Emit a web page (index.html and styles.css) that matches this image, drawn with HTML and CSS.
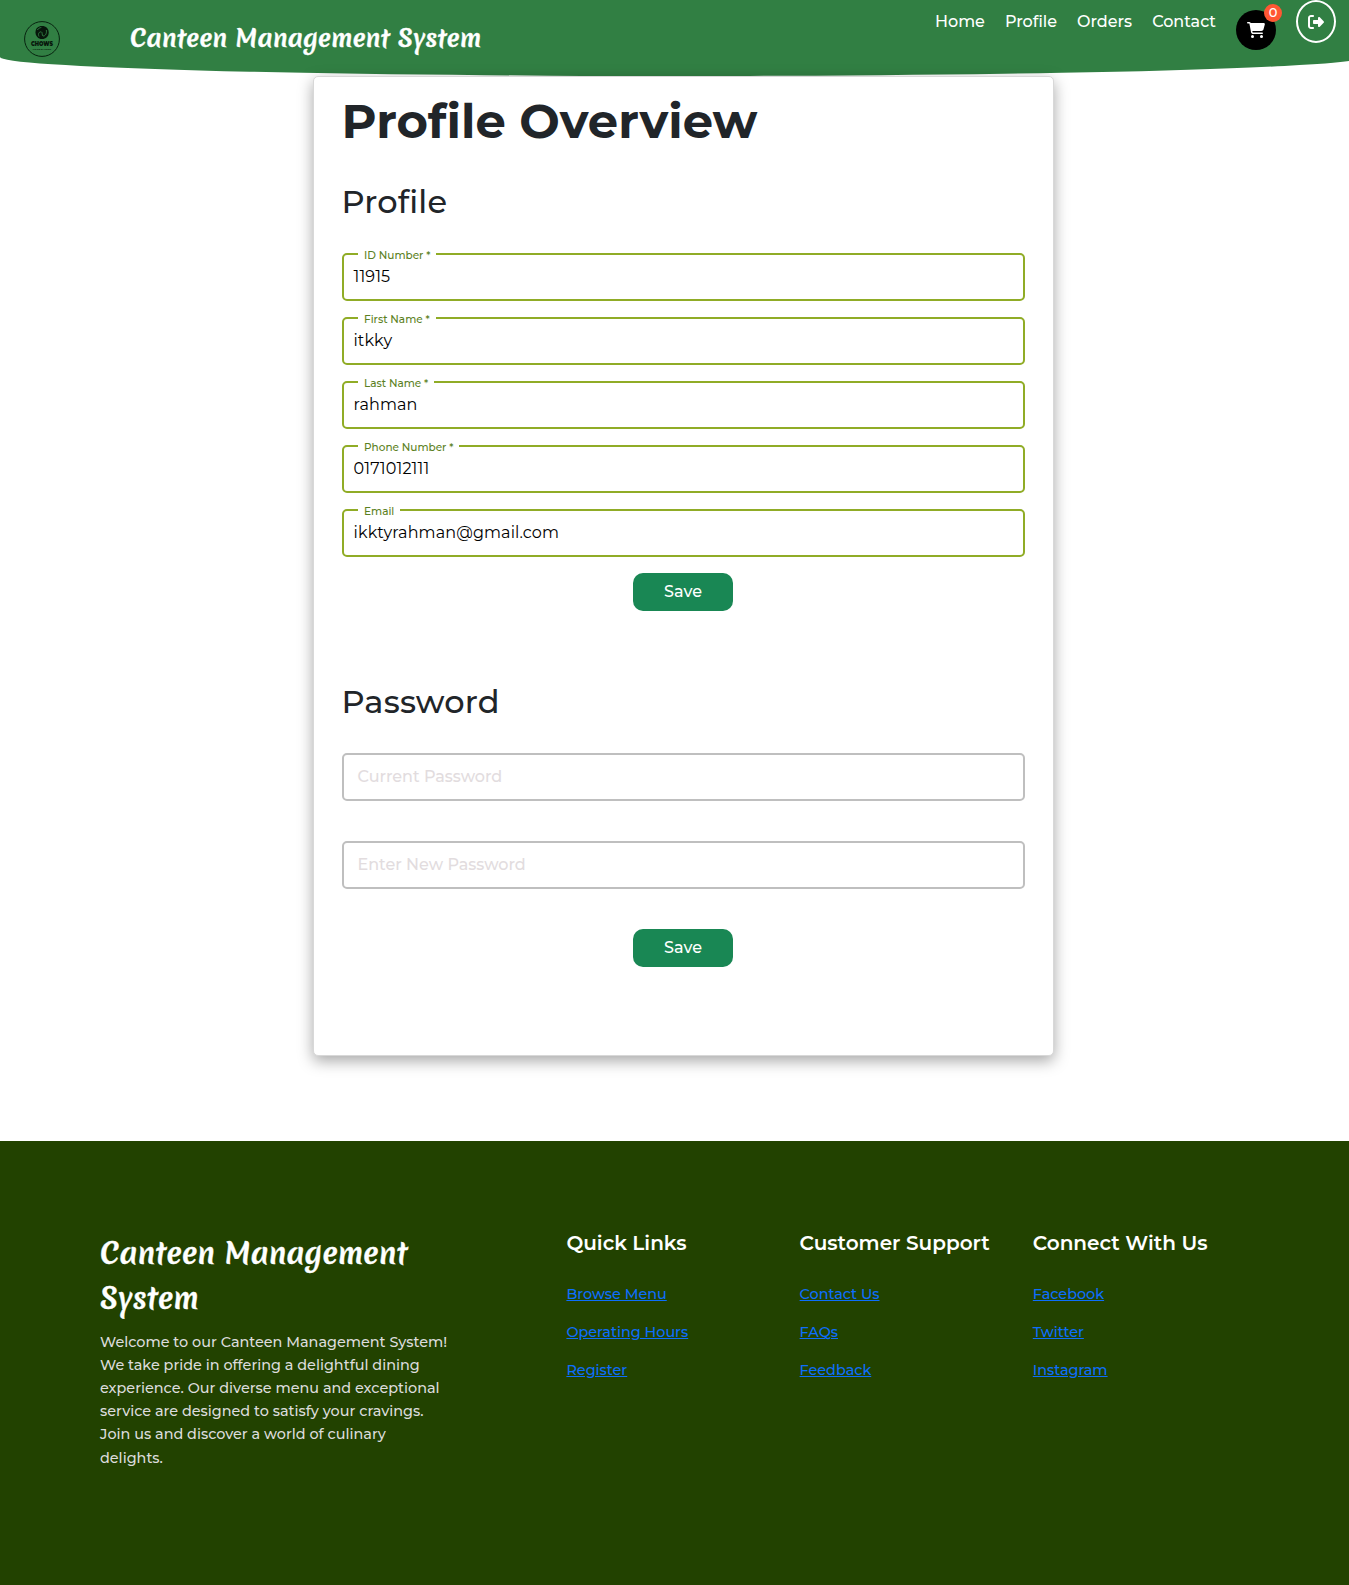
FILE: index.html
```html
<!DOCTYPE html>
<html lang="en">
<head>
<meta charset="utf-8">
<title>Canteen Management System</title>
<link rel="stylesheet" href="styles.css">
</head>
<body>
<header class="header">
  <svg class="logo" viewBox="0 0 36 36">
    <circle cx="18" cy="18" r="17.4" fill="none" stroke="#07230f" stroke-width="1"/>
    <path d="M18 5c-4 0-6.500 2.500-6.500 6.200 0 3.800 2.700 6.800 6.500 6.800s6.700-2.800 6.700-6.600S22 5 18 5z" fill="#07160b"/>
    <path d="M15 15.500c-1.500-3 .5-5 2.300-4.600 1.500.5.300 3.100 1.700 4.100 2.500.3 4-3 3.300-6M13.300 9c1-1.500 2.500-2.300 4-2.500" fill="none" stroke="#317f43" stroke-width=".9"/>
    <text x="18" y="25" text-anchor="middle" textLength="22" lengthAdjust="spacingAndGlyphs" class="logo-name">CHOWS</text>
    <text x="18" y="29.300" text-anchor="middle" class="logo-sub">FOOD &amp; MORE</text>
  </svg>
  <div class="brand">Canteen Management System</div>
  <nav class="nav">
    <a>Home</a><a>Profile</a><a>Orders</a><a>Contact</a>
    <div class="cart">
      <svg width="18" height="16" viewBox="0 0 576 512" fill="#fff"><path d="M0 24C0 10.700 10.700 0 24 0H69.500c22 0 41.500 12.800 50.600 32h411c26.300 0 45.500 25 38.600 50.400l-41 152.300c-8.500 31.400-37 53.300-69.500 53.300H170.700l5.400 28.500c2.200 11.300 12.100 19.500 23.600 19.500H488c13.300 0 24 10.700 24 24s-10.700 24-24 24H199.700c-34.600 0-64.300-24.600-70.700-58.500L77.400 54.500c-.7-3.800-4-6.500-7.900-6.500H24C10.700 48 0 37.300 0 24zM128 464a48 48 0 1 1 96 0 48 48 0 1 1-96 0zm336-48a48 48 0 1 1 0 96 48 48 0 1 1 0-96z"/></svg>
      <span class="count">0</span>
    </div>
    <div class="logout">
      <svg width="16" height="16" viewBox="0 0 512 512" fill="#fff"><path d="M377.900 105.900L500.700 228.700c7.200 7.200 11.300 17.100 11.300 27.300s-4.100 20.100-11.300 27.300L377.900 406.100c-6.400 6.400-15 9.900-24 9.900c-18.700 0-33.900-15.200-33.900-33.900l0-62.100-128 0c-17.700 0-32-14.300-32-32l0-64c0-17.700 14.300-32 32-32l128 0 0-62.100c0-18.700 15.200-33.900 33.900-33.900c9 0 17.600 3.600 24 9.900zM160 96L96 96c-17.700 0-32 14.300-32 32l0 256c0 17.700 14.300 32 32 32l64 0c17.700 0 32 14.300 32 32s-14.300 32-32 32l-64 0c-53 0-96-43-96-96L0 128C0 75 43 32 96 32l64 0c17.700 0 32 14.300 32 32s-14.300 32-32 32z"/></svg>
    </div>
  </nav>
</header>
<main class="card">
  <h1 class="title">Profile Overview</h1>
  <section>
    <h2 class="subtitle">Profile</h2>
    <div class="fields">
      <div class="field"><label class="label">ID Number *</label><span class="value">11915</span></div>
      <div class="field"><label class="label">First Name *</label><span class="value">itkky</span></div>
      <div class="field"><label class="label">Last Name *</label><span class="value">rahman</span></div>
      <div class="field"><label class="label">Phone Number *</label><span class="value">0171012111</span></div>
      <div class="field"><label class="label">Email</label><span class="value">ikktyrahman@gmail.com</span></div>
    </div>
    <button class="save">Save</button>
  </section>
  <section class="password">
    <h2 class="subtitle">Password</h2>
    <div class="fields wide">
      <div class="field empty">Current Password</div>
      <div class="field empty">Enter New Password</div>
    </div>
    <button class="save">Save</button>
  </section>
</main>
<footer class="footer">
  <div class="about">
    <h2 class="footer-brand">Canteen Management System</h2>
    <p class="blurb">Welcome to our Canteen Management System! We take pride in offering a delightful dining experience. Our diverse menu and exceptional service are designed to satisfy your cravings. Join us and discover a world of culinary delights.</p>
  </div>
  <div class="links"><h3>Quick Links</h3><a href="#">Browse Menu</a><a href="#">Operating Hours</a><a href="#">Register</a></div>
  <div class="links"><h3>Customer Support</h3><a href="#">Contact Us</a><a href="#">FAQs</a><a href="#">Feedback</a></div>
  <div class="links"><h3>Connect With Us</h3><a href="#">Facebook</a><a href="#">Twitter</a><a href="#">Instagram</a></div>
</footer>
</body>
</html>
```
FILE: styles.css
```css
* { box-sizing: border-box; }
html { overflow-x: hidden; }
body {
  margin: 0;
  overflow-x: hidden;
  background: #fff;
  color: #212529;
  font: 500 16px/24px Montserrat, Inter, sans-serif;
}
h1, h2, h3, p { margin: 0; }

.header {
  width: 1365px;
  height: 76px;
  display: flex;
  align-items: flex-start;
  background: #317f43;
  border-radius: 0 0 50% 50% / 0 0 25% 25%;
  color: #fff;
}
.logo { width: 36px; height: 36px; margin: 21px 0 0 24px; }
.logo-name { font: 900 6.500px Montserrat, Inter, sans-serif; fill: #07160b; }
.logo-sub { font: 700 2.400px Montserrat, Inter, sans-serif; fill: #07230f; }
.brand {
  margin: 18px 0 0 70px;
  font: 700 24px/40px Merienda, Lato, cursive;
  white-space: nowrap;
  -webkit-text-stroke: .4px #fff;
}
.nav {
  display: flex;
  align-items: flex-start;
  gap: 20px;
  margin-left: auto;
  margin-right: 29px;
}
.nav a { margin-top: 10px; }
.cart {
  position: relative;
  display: grid;
  place-items: center;
  width: 40px;
  height: 40px;
  margin-top: 10px;
  border-radius: 50%;
  background: #000;
}
.count {
  position: absolute;
  top: -6px;
  right: -6px;
  width: 18px;
  height: 18px;
  border-radius: 50%;
  background: #ff5733;
  font-size: 13px;
  line-height: 17px;
  text-align: center;
}
.logout {
  display: grid;
  place-items: center;
  width: 40px;
  height: 43px;
  border: 2px solid #fff;
  border-radius: 50%;
}

.card {
  width: 741px;
  height: 980px;
  margin: 0 0 0 313px;
  padding: 15px 28px;
  border: 1px solid #d8d8d8;
  border-radius: 5px;
  background: #fff;
  box-shadow: 0 5px 15px rgba(0, 0, 0, .35);
}
.title { margin-left: -.5px; font-size: 48px; font-weight: 700; line-height: 58px; }
.subtitle { margin: 32px 0 0 -.5px; font-size: 32px; font-weight: 530; line-height: 39px; letter-spacing: .2px; }
.fields { display: flex; flex-direction: column; gap: 16px; margin-top: 32px; }
.field {
  position: relative;
  height: 48px;
  padding: 10px 9.500px;
  border: 2px solid #90ac26;
  border-radius: 5px;
}
.label {
  position: absolute;
  top: -6px;
  left: 14px;
  padding: 0 6px;
  background: #fff;
  color: #5b7f22;
  font-size: 10.500px;
  line-height: 14px;
}
.value { color: #000; font-weight: 400; letter-spacing: .13px; }
.save {
  display: block;
  width: 100px;
  height: 38px;
  margin: 16px 0 0 291px;
  border: 0;
  border-radius: 10px;
  background: #198754;
  color: #fff;
  font: inherit;
}
.password { margin-top: 71px; }
.password .subtitle { margin-top: 0; }
.fields.wide { gap: 40px; }
.fields.wide + .save { margin-top: 40px; }
.field.empty { padding: 10px 13.500px; border-color: #bfbfbf; color: #e2dcde; }

.footer {
  display: grid;
  grid-template-columns: 2fr 1fr 1fr 1fr;
  height: 444px;
  margin-top: 85px;
  padding: 90px 83px 0 100px;
  background: #224200;
}
.about { width: 350px; }
.footer-brand {
  color: #fff;
  font: 700 28.400px/45px Merienda, Lato, cursive;
  -webkit-text-stroke: .4px #fff;
}
.blurb { margin-top: 10.300px; color: #dcdcdc; font-size: 14.400px; line-height: 23.040px; }
.links { display: flex; flex-direction: column; align-items: flex-start; gap: 15px; }
.links h3 { margin-bottom: 13px; color: #fff; font-size: 20px; font-weight: 600; line-height: 24px; white-space: nowrap; }
.links a { color: #0d6efd; font-size: 14.400px; line-height: 23px; }
```
